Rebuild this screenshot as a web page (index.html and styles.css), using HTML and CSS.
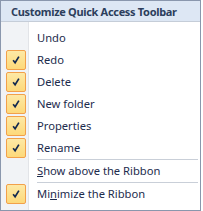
FILE: index.html
```html
<!DOCTYPE html>
<html>
<head>
<meta charset="utf-8">
<link rel="stylesheet" href="styles.css">
</head>
<body>
<div class="menu">
  <div class="header">Customize Quick Access Toolbar</div>
  <div class="list">
    <div class="item"><span class="check off"></span><span class="label">Undo</span></div>
    <div class="item"><span class="check"><svg viewBox="0 0 20 20" width="20" height="20"><path d="M6.8 10.3 L9 13 L13.2 6.2" fill="none" stroke="#13294f" stroke-width="1.9"/></svg></span><span class="label">Redo</span></div>
    <div class="item"><span class="check"><svg viewBox="0 0 20 20" width="20" height="20"><path d="M6.8 10.3 L9 13 L13.2 6.2" fill="none" stroke="#13294f" stroke-width="1.9"/></svg></span><span class="label">Delete</span></div>
    <div class="item"><span class="check"><svg viewBox="0 0 20 20" width="20" height="20"><path d="M6.8 10.3 L9 13 L13.2 6.2" fill="none" stroke="#13294f" stroke-width="1.9"/></svg></span><span class="label">New folder</span></div>
    <div class="item"><span class="check"><svg viewBox="0 0 20 20" width="20" height="20"><path d="M6.8 10.3 L9 13 L13.2 6.2" fill="none" stroke="#13294f" stroke-width="1.9"/></svg></span><span class="label">Properties</span></div>
    <div class="item"><span class="check"><svg viewBox="0 0 20 20" width="20" height="20"><path d="M6.8 10.3 L9 13 L13.2 6.2" fill="none" stroke="#13294f" stroke-width="1.9"/></svg></span><span class="label">Rename</span></div>
    <div class="sep"></div>
    <div class="item"><span class="check off"></span><span class="label"><u>S</u>how above the Ribbon</span></div>
    <div class="sep"></div>
    <div class="item"><span class="check"><svg viewBox="0 0 20 20" width="20" height="20"><path d="M6.8 10.3 L9 13 L13.2 6.2" fill="none" stroke="#13294f" stroke-width="1.9"/></svg></span><span class="label">Mi<u>n</u>imize the Ribbon</span></div>
  </div>
</div>
</body>
</html>
```
FILE: styles.css
```css
html, body {
  margin: 0;
  padding: 0;
  background: #ffffff;
}
.menu {
  width: 199px;
  height: 209px;
  border: 1px solid #8a97ad;
  background: #ffffff;
  font-family: "Noto Sans", "DejaVu Sans", sans-serif;
  font-size: 11.2px;
  display: flex;
  flex-direction: column;
}
.header {
  box-sizing: border-box;
  background: #dde7f4;
  border-bottom: 1px solid #c5cdd8;
  height: 21px;
  padding-left: 10px;
  display: flex;
  align-items: center;
  font-weight: bold;
  font-size: 11px;
  letter-spacing: -0.32px;
  white-space: nowrap;
  color: #2c3e5c;
}
.list {
  flex: 1;
  padding-top: 5px;
  background: linear-gradient(to right, #f1f3f6 0, #f1f3f6 27px, #e2e4e8 27px, #e2e4e8 28px, #ffffff 28px);
}
.item {
  height: 22px;
  display: flex;
  align-items: center;
  color: #1d2c4d;
}
.check {
  width: 18px;
  height: 18px;
  margin-left: 5px;
  border: 1px solid #f2a04a;
  border-radius: 2px;
  background: linear-gradient(#fde9a6, #fdd97a);
  display: flex;
  align-items: center;
  justify-content: center;
  box-sizing: content-box;
}
.check svg {
  width: 18px;
  height: 18px;
}
.check.off {
  border-color: transparent;
  background: transparent;
}
.label {
  margin-left: 11px;
  padding-bottom: 2px;
  white-space: nowrap;
}
.sep {
  height: 1px;
  margin-left: 36px;
  margin-right: 2px;
  background: #c9cfd8;
}
```
